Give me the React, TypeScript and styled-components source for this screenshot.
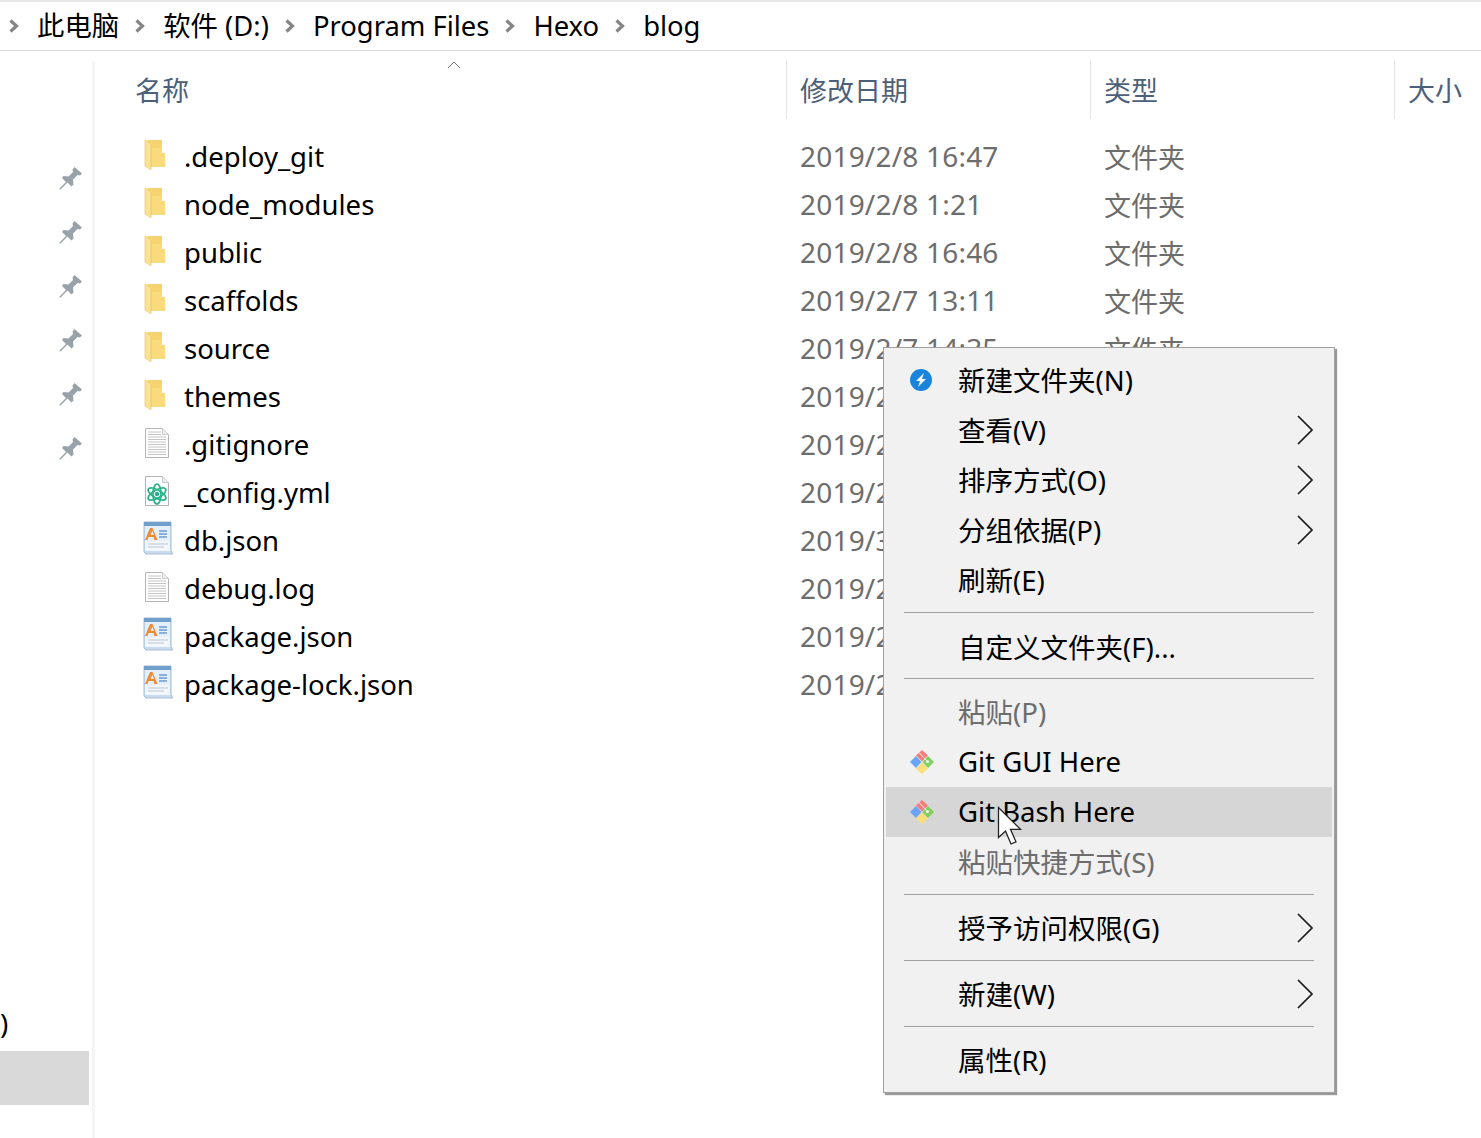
import React, { FC } from "react";
import styled, { createGlobalStyle } from "styled-components";

type FileKind = "folder" | "text" | "atom" | "wordpad";

type FileRow = { name: string; date: string; type: string; kind: FileKind };

const files: FileRow[] = [
  { name: ".deploy_git", date: "2019/2/8 16:47", type: "文件夹", kind: "folder" },
  { name: "node_modules", date: "2019/2/8 1:21", type: "文件夹", kind: "folder" },
  { name: "public", date: "2019/2/8 16:46", type: "文件夹", kind: "folder" },
  { name: "scaffolds", date: "2019/2/7 13:11", type: "文件夹", kind: "folder" },
  { name: "source", date: "2019/2/7 14:35", type: "文件夹", kind: "folder" },
  { name: "themes", date: "2019/2/7 13:11", type: "文件夹", kind: "folder" },
  { name: ".gitignore", date: "2019/2/7 13:11", type: "文本文档", kind: "text" },
  { name: "_config.yml", date: "2019/2/8 16:40", type: "YML 文件", kind: "atom" },
  { name: "db.json", date: "2019/3/1 10:12", type: "JSON 文件", kind: "wordpad" },
  { name: "debug.log", date: "2019/2/8 16:47", type: "文本文档", kind: "text" },
  { name: "package.json", date: "2019/2/7 13:11", type: "JSON 文件", kind: "wordpad" },
  { name: "package-lock.json", date: "2019/2/7 13:11", type: "JSON 文件", kind: "wordpad" },
];

const crumbs = ["此电脑", "软件 (D:)", "Program Files", "Hexo", "blog"];

const FolderIcon: FC = () => (
  <IconNudge up={2}>
    <svg width="30" height="32" viewBox="0 0 30 32">
      <path d="M5 1h15v13h3v14H5z" fill="#f5d36e" />
      <path d="M10 9h10v5h3v14H10z" fill="#f9da7c" />
      <path d="M3 1l6 4v26l-6-4z" fill="#fbe293" stroke="#ecc768" strokeWidth="0.7" />
    </svg>
  </IconNudge>
);

const PageBase: FC<{ children?: React.ReactNode }> = ({ children }) => (
  <IconNudge up={3}>
    <svg width="30" height="32" viewBox="0 0 30 32">
      <path d="M3.500 1.500h17l6 6v23h-23z" fill="#fff" stroke="#b4b4b4" />
      <path d="M20.500 1.500v6h6" fill="#eee" stroke="#c8c8c8" />
      {children}
    </svg>
  </IconNudge>
);

const TextFileIcon: FC = () => (
  <PageBase>
    {[5, 7.5, 10, 12.5, 15, 17.5, 20, 22.5, 25, 27.5].map((y) => (
      <path key={y} d={`M6 ${y}h${y < 8 ? 13 : 18}`} stroke="#c4c4c4" strokeWidth="1" />
    ))}
  </PageBase>
);

const AtomFileIcon: FC = () => (
  <PageBase>
    <g fill="none" stroke="#27b388" strokeWidth="1.700" transform="translate(15 19)">
      <ellipse rx="10" ry="4" transform="rotate(30)" />
      <ellipse rx="10" ry="4" transform="rotate(-30)" />
      <ellipse rx="10" ry="4" transform="rotate(90)" />
      <circle r="1.400" fill="#27b388" />
    </g>
  </PageBase>
);

const WordpadIcon: FC = () => (
  <IconNudge up={4}>
    <svg width="32" height="34" viewBox="0 0 32 34">
      <path d="M2 1h27v29l2 3H4l-2-2z" fill="#c8dcee" stroke="#a9bfd4" />
      <path d="M2 1h27v4H2z" fill="#6f9fca" />
      <path d="M3 5h25v25H3z" fill="#e4eff9" />
      <path d="M3 20h25v10H3z" fill="#f3f7fb" />
      <path d="M3 19l5-12h2.500l5 12h-3l-1-3h-5l-1 3zM8.500 14h3.500l-1.800-4.500z" fill="#f08a2e" fillRule="evenodd" />
      <path d="M17 10h8M17 13h8M17 16h8" stroke="#6c9bd8" strokeWidth="1.500" />
      <path d="M6 23h20M6 26h16" stroke="#b9c6d2" strokeWidth="1" />
    </svg>
  </IconNudge>
);

const fileIcons: Record<FileKind, FC> = {
  folder: FolderIcon,
  text: TextFileIcon,
  atom: AtomFileIcon,
  wordpad: WordpadIcon,
};

const PinIcon: FC = () => (
  <svg width="24" height="24" viewBox="0 0 24 24">
    <path
      d="M1 23l7-7-4-4 1.500-2 5 .5 4.500-4.500-.5-2.500 2-2.500 7.500 6.500-2 2-2.500-.5-4.500 4.500 .5 5-2 2-4-4-7 7z"
      fill="#98a2a9"
    />
  </svg>
);

const CrumbChevron: FC = () => (
  <svg width="12" height="14" viewBox="0 0 12 14">
    <path d="M2.500 1.500L8.500 7l-6 5.500" fill="none" stroke="#858585" strokeWidth="3.200" />
  </svg>
);

const SubmenuChevron: FC = () => (
  <svg width="18" height="30" viewBox="0 0 18 30">
    <path d="M2 1l14 14L2 29" fill="none" stroke="#1a1a1a" strokeWidth="1.700" />
  </svg>
);

const BoltBadge: FC = () => (
  <svg width="24" height="24" viewBox="0 0 24 24">
    <circle cx="12" cy="12" r="11" fill="#1a84dc" />
    <path d="M15 5l-8 8h4l-2 6 8-8h-4z" fill="#f2f8fd" />
  </svg>
);

const GitDiamond: FC = () => (
  <svg width="26" height="26" viewBox="0 0 26 26">
    <path d="M1 13l6-6 5.500 6-5.500 6z" fill="#6aa5f7" />
    <path d="M7 6.500L13 1l6 5.500-6 6z" fill="#f47d7d" />
    <path d="M13.500 13l5.500-6 6 6-6 6z" fill="#7fd15c" />
    <path d="M7 19.500l6-6 6 6-6 5.500z" fill="#fbe07a" />
    <path d="M10 3.500l8 8.500" stroke="#f1f1f1" strokeWidth="1" fill="none" />
    <circle cx="18.500" cy="12.500" r="1.600" fill="#f1f1f1" />
  </svg>
);

const Cursor: FC = () => (
  <svg width="28" height="40" viewBox="0 0 28 40">
    <path
      d="M1.500 1.500v30l7-6.500 5.500 13 5-2.200-5.500-12.500h10z"
      fill="#fff"
      stroke="#222"
      strokeWidth="1.300"
    />
  </svg>
);

type MenuEntry =
  | { sep: number; line: number }
  | { label: string; icon?: "bolt" | "git"; sub?: boolean; disabled?: boolean; active?: boolean };

const menu: MenuEntry[] = [
  { label: "新建文件夹(N)", icon: "bolt" },
  { label: "查看(V)", sub: true },
  { label: "排序方式(O)", sub: true },
  { label: "分组依据(P)", sub: true },
  { label: "刷新(E)" },
  { sep: 17, line: 7 },
  { label: "自定义文件夹(F)..." },
  { sep: 15, line: 6 },
  { label: "粘贴(P)", disabled: true },
  { label: "Git GUI Here", icon: "git" },
  { label: "Git Bash Here", icon: "git", active: true },
  { label: "粘贴快捷方式(S)", disabled: true },
  { sep: 16, line: 7 },
  { label: "授予访问权限(G)", sub: true },
  { sep: 16, line: 7 },
  { label: "新建(W)", sub: true },
  { sep: 16, line: 7 },
  { label: "属性(R)" },
];

const App: FC = () => {
  return (
    <Root>
      <GlobalStyle />
      <AddressBar>
        {crumbs.map((crumb) => (
          <Crumb key={crumb}>
            <CrumbChevron />
            <CrumbLabel>{crumb}</CrumbLabel>
          </Crumb>
        ))}
      </AddressBar>
      <Body>
        <Sidebar>
          <Pins>
            {[0, 1, 2, 3, 4, 5].map((i) => (
              <PinSlot key={i}>
                <PinIcon />
              </PinSlot>
            ))}
          </Pins>
          <SideBottom>
            <SideText>)</SideText>
            <SideSelected />
          </SideBottom>
        </Sidebar>
        <Content>
          <SortArrow>
            <svg width="14" height="8" viewBox="0 0 14 8">
              <path d="M1 7l6-6 6 6" fill="none" stroke="#777" strokeWidth="1" />
            </svg>
          </SortArrow>
          <Header>
            <HeaderCell width={691}>名称</HeaderCell>
            <HeaderCell width={304} divider>修改日期</HeaderCell>
            <HeaderCell width={304} divider>类型</HeaderCell>
            <HeaderCell width={87} divider>大小</HeaderCell>
          </Header>
          <Rows>
            {files.map((file) => {
              const Icon = fileIcons[file.kind];
              return (
                <Row key={file.name}>
                  <IconSlot>
                    <Icon />
                  </IconSlot>
                  <FileName>{file.name}</FileName>
                  <DateCell>{file.date}</DateCell>
                  <TypeCell>{file.type}</TypeCell>
                </Row>
              );
            })}
          </Rows>
        </Content>
      </Body>
      <ContextMenu>
        {menu.map((entry, i) =>
          "sep" in entry ? (
            <Separator key={i} height={entry.sep} line={entry.line} />
          ) : (
            <MenuItem key={entry.label} active={entry.active} disabled={entry.disabled}>
              <MenuIcon>
                {entry.icon === "bolt" && <BoltBadge />}
                {entry.icon === "git" && <GitDiamond />}
              </MenuIcon>
              <MenuLabel>{entry.label}</MenuLabel>
              {entry.sub && (
                <SubmenuArrow>
                  <SubmenuChevron />
                </SubmenuArrow>
              )}
            </MenuItem>
          )
        )}
        <CursorWrap>
          <Cursor />
        </CursorWrap>
      </ContextMenu>
    </Root>
  );
};

export default App;

const GlobalStyle = createGlobalStyle`
  html, body {
    margin: 0;
    padding: 0;
    background: #fff;
  }
  body {
    font-family: "Noto Sans", "Noto Sans CJK SC", sans-serif;
    font-size: 27.5px;
    color: #000;
  }
`;

const Root = styled.div`
  position: relative;
  width: 1481px;
  height: 1138px;
  overflow: hidden;
  background: #fff;
`;
const AddressBar = styled.div`
  box-sizing: border-box;
  height: 51px;
  padding-left: 8px;
  display: flex;
  align-items: center;
  font-size: 27.4px;
  border-top: 2px solid #e6e6e6;
  border-bottom: 1px solid #d9d9d9;
`;
const Crumb = styled.div`
  display: flex;
  align-items: center;
  margin-right: 15px;
`;
const CrumbLabel = styled.span`
  margin-left: 17px;
  line-height: 46px;
`;
const Body = styled.div`
  display: flex;
  height: 1087px;
`;
const Sidebar = styled.div`
  width: 92px;
  height: 1077px;
  margin-top: 10px;
  border-right: 3px solid #f5f5f5;
  display: flex;
  flex-direction: column;
  justify-content: space-between;
`;
const Pins = styled.div`
  padding-top: 90px;
  display: flex;
  flex-direction: column;
`;
const PinSlot = styled.div`
  height: 54px;
  padding-left: 58px;
  display: flex;
  align-items: center;
`;
const SideBottom = styled.div`
  padding-bottom: 33px;
`;
const SideText = styled.div`
  line-height: 40px;
  height: 40px;
  margin-bottom: 7px;
`;
const SideSelected = styled.div`
  width: 89px;
  height: 54px;
  background: #d9d9d9;
`;
const Content = styled.div`
  position: relative;
  flex: 1;
  min-width: 0;
`;
const SortArrow = styled.div`
  position: absolute;
  left: 352px;
  top: 8px;
  line-height: 0;
`;
const Header = styled.div`
  display: flex;
  height: 58px;
  margin-top: 10px;
`;
const HeaderCell = styled.div<{ width: number; divider?: boolean }>`
  box-sizing: border-box;
  width: ${({ width }) => width}px;
  flex: none;
  padding-left: ${({ divider }) => (divider ? 13 : 40)}px;
  border-left: ${({ divider }) => (divider ? "1px solid #e5e5e5" : "none")};
  color: #4c607a;
  font-size: 27px;
  line-height: 60px;
  white-space: nowrap;
`;
const Rows = styled.div`
  margin-top: 13px;
`;
const Row = styled.div`
  display: flex;
  align-items: center;
  height: 48px;
`;
const IconSlot = styled.div`
  width: 89px;
  padding-left: 47px;
  box-sizing: border-box;
  flex: none;
  display: flex;
  align-items: center;
  line-height: 0;
`;
const IconNudge = styled.div<{ up: number }>`
  margin-bottom: ${({ up }) => up}px;
`;
const FileName = styled.div`
  width: 616px;
  flex: none;
  white-space: nowrap;
`;
const DateCell = styled.div`
  width: 304px;
  flex: none;
  color: #6d6d6d;
  font-size: 28px;
  letter-spacing: 0.2px;
  white-space: nowrap;
`;
const TypeCell = styled.div`
  width: 300px;
  flex: none;
  color: #6d6d6d;
  font-size: 27px;
  white-space: nowrap;
`;
const ContextMenu = styled.div`
  position: absolute;
  left: 883px;
  top: 347px;
  box-sizing: border-box;
  width: 452px;
  height: 746px;
  padding: 7px 2px 0;
  background: #f1f1f1;
  border: 1px solid #a0a0a0;
  box-shadow: 2px 2px 1px rgba(0, 0, 0, 0.4);
`;
const MenuItem = styled.div<{ active?: boolean; disabled?: boolean }>`
  display: flex;
  align-items: center;
  height: 50px;
  background: ${({ active }) => (active ? "#d6d6d6" : "transparent")};
  color: ${({ disabled }) => (disabled ? "#6d6d6d" : "#000")};
`;
const MenuIcon = styled.div`
  width: 72px;
  flex: none;
  padding-left: 23px;
  box-sizing: border-box;
  display: flex;
  align-items: center;
  line-height: 0;
`;
const MenuLabel = styled.div`
  flex: 1;
  padding-bottom: 2px;
  white-space: nowrap;
`;
const SubmenuArrow = styled.div`
  width: 36px;
  flex: none;
  line-height: 0;
`;
const Separator = styled.div<{ height: number; line: number }>`
  box-sizing: border-box;
  height: ${({ height }) => height}px;
  padding-top: ${({ line }) => line}px;
  margin: 0 18px;

  &::after {
    content: "";
    display: block;
    height: 1px;
    background: #a0a0a0;
  }
`;
const CursorWrap = styled.div`
  position: absolute;
  left: 113px;
  top: 458px;
  line-height: 0;
`;
